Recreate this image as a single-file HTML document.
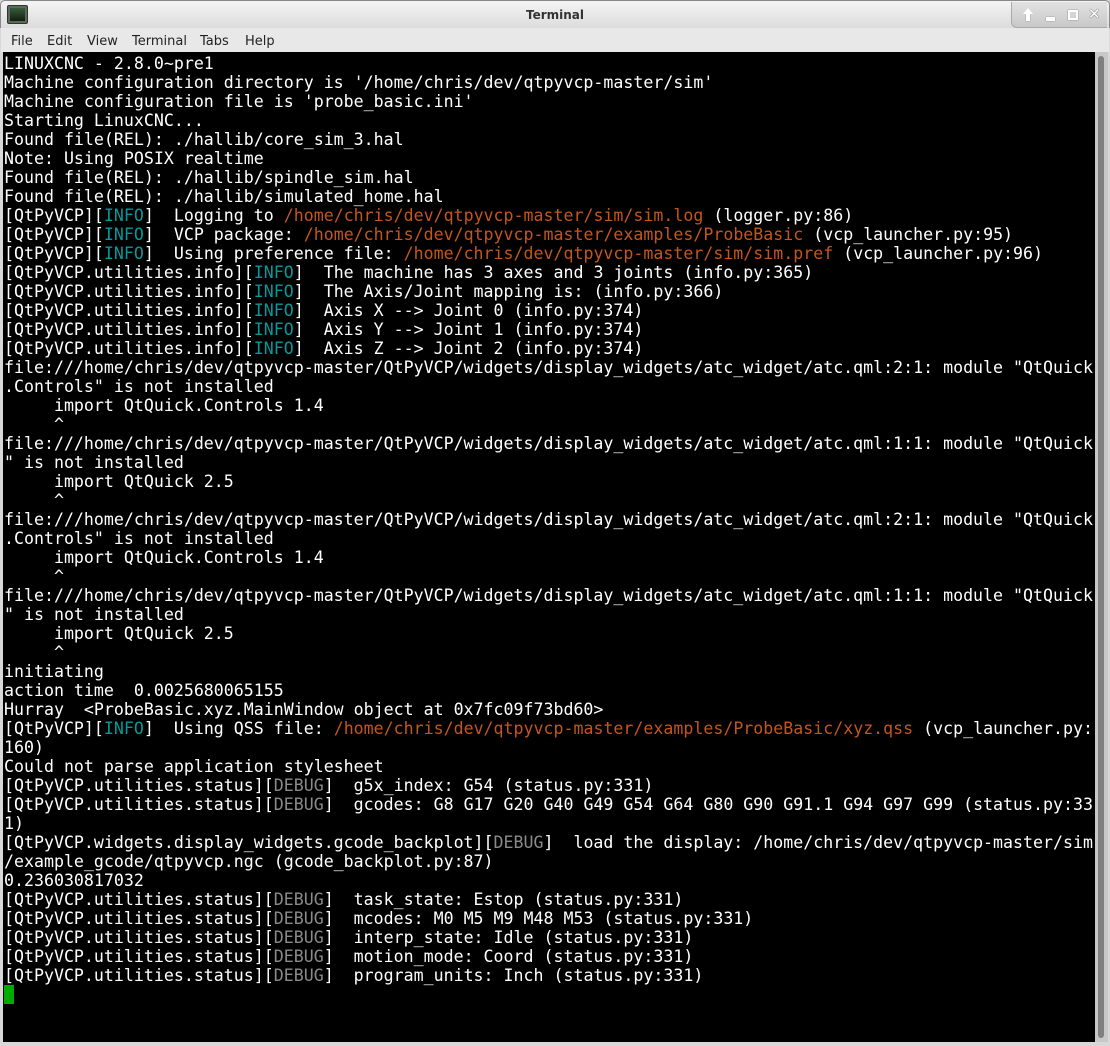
<!DOCTYPE html>
<html><head><meta charset="utf-8"><style>
*{margin:0;padding:0;box-sizing:border-box}
body{width:1110px;height:1046px;overflow:hidden;background:#d8d8d8;font-family:"DejaVu Sans","Liberation Sans",sans-serif;position:relative}
#title{position:absolute;left:0;top:0;width:1110px;height:28px;background:linear-gradient(#f4f4f4,#dcdcdc);border:1px solid #888;border-bottom:none;border-radius:5px 5px 0 0}
#title .t{position:absolute;left:0;right:0;top:7px;text-align:center;font-size:12px;font-weight:bold;color:#333}
#icon{position:absolute;left:6px;top:4px;width:21px;height:19px;background:#5a6a5a;border:1px solid #333;border-radius:2px}
#icon:after{content:"";position:absolute;left:2px;top:2px;width:15px;height:13px;background:linear-gradient(#3a5a3a,#102010)}
#btns{position:absolute;right:2px;top:1px;width:96px;height:26px;background:linear-gradient(#e2e2e2,#c8c8c8);border:1px solid #aaa;border-top:none;border-right:none;border-radius:0 0 0 6px}
#btns i{position:absolute;display:block;border:2px solid #fff;box-shadow:0 0 1px #555}
#menu{position:absolute;left:1px;top:28px;width:1108px;height:24px;background:#e8e8e8;font-size:13px;color:#222}
#menu span{position:absolute;top:6px}
#term{position:absolute;left:3px;top:52px;width:1092px;height:990px;background:#000;overflow:hidden}
pre{position:absolute;left:1px;top:2px;font-family:"DejaVu Sans Mono","Liberation Mono",monospace;font-size:16.6px;line-height:19px;color:#fff;white-space:pre}
.c{color:#06989a}.o{color:#c4561a}.g{color:#8a8a8a}
#cur{position:absolute;left:1px;top:933px;width:10px;height:19px;background:#0a0}
#sb{position:absolute;left:1095px;top:52px;width:13px;height:990px;background:#c8c8c8}
#sb div{position:absolute;left:3px;top:4px;width:6px;height:982px;background:#808080;border-radius:3px}
</style></head><body>
<div id="title"><div id="icon"></div><div class="t">Terminal</div>
<div id="btns"><i style="left:14px;top:12px;width:4px;height:7px;border-width:0;background:#fff"></i><i style="left:11px;top:6px;width:10px;height:6px;border:none;background:none;box-shadow:none;border-left:5px solid transparent;border-right:5px solid transparent;border-bottom:6px solid #fff;width:0;height:0"></i><i style="left:34px;top:15px;width:9px;height:4px"></i><i style="left:56px;top:8px;width:10px;height:10px"></i><span style="position:absolute;left:76px;top:3px;color:#fff;font-size:15px;font-weight:bold;text-shadow:0 0 1px #555,0 0 1px #555">✕</span></div></div>
<div id="menu"><span style="left:10px">File</span><span style="left:46px">Edit</span><span style="left:86px">View</span><span style="left:131px">Terminal</span><span style="left:199px">Tabs</span><span style="left:244px">Help</span></div>
<div id="term"><pre>LINUXCNC - 2.8.0~pre1
Machine configuration directory is '/home/chris/dev/qtpyvcp-master/sim'
Machine configuration file is 'probe_basic.ini'
Starting LinuxCNC...
Found file(REL): ./hallib/core_sim_3.hal
Note: Using POSIX realtime
Found file(REL): ./hallib/spindle_sim.hal
Found file(REL): ./hallib/simulated_home.hal
[QtPyVCP][<span class="c">INFO</span>]  Logging to <span class="o">/home/chris/dev/qtpyvcp-master/sim/sim.log</span> (logger.py:86)
[QtPyVCP][<span class="c">INFO</span>]  VCP package: <span class="o">/home/chris/dev/qtpyvcp-master/examples/ProbeBasic</span> (vcp_launcher.py:95)
[QtPyVCP][<span class="c">INFO</span>]  Using preference file: <span class="o">/home/chris/dev/qtpyvcp-master/sim/sim.pref</span> (vcp_launcher.py:96)
[QtPyVCP.utilities.info][<span class="c">INFO</span>]  The machine has 3 axes and 3 joints (info.py:365)
[QtPyVCP.utilities.info][<span class="c">INFO</span>]  The Axis/Joint mapping is: (info.py:366)
[QtPyVCP.utilities.info][<span class="c">INFO</span>]  Axis X --> Joint 0 (info.py:374)
[QtPyVCP.utilities.info][<span class="c">INFO</span>]  Axis Y --> Joint 1 (info.py:374)
[QtPyVCP.utilities.info][<span class="c">INFO</span>]  Axis Z --> Joint 2 (info.py:374)
file:///home/chris/dev/qtpyvcp-master/QtPyVCP/widgets/display_widgets/atc_widget/atc.qml:2:1: module "QtQuick
.Controls" is not installed
     import QtQuick.Controls 1.4
     ^
file:///home/chris/dev/qtpyvcp-master/QtPyVCP/widgets/display_widgets/atc_widget/atc.qml:1:1: module "QtQuick
" is not installed
     import QtQuick 2.5
     ^
file:///home/chris/dev/qtpyvcp-master/QtPyVCP/widgets/display_widgets/atc_widget/atc.qml:2:1: module "QtQuick
.Controls" is not installed
     import QtQuick.Controls 1.4
     ^
file:///home/chris/dev/qtpyvcp-master/QtPyVCP/widgets/display_widgets/atc_widget/atc.qml:1:1: module "QtQuick
" is not installed
     import QtQuick 2.5
     ^
initiating
action time  0.0025680065155
Hurray  &lt;ProbeBasic.xyz.MainWindow object at 0x7fc09f73bd60&gt;
[QtPyVCP][<span class="c">INFO</span>]  Using QSS file: <span class="o">/home/chris/dev/qtpyvcp-master/examples/ProbeBasic/xyz.qss</span> (vcp_launcher.py:
160)
Could not parse application stylesheet
[QtPyVCP.utilities.status][<span class="g">DEBUG</span>]  g5x_index: G54 (status.py:331)
[QtPyVCP.utilities.status][<span class="g">DEBUG</span>]  gcodes: G8 G17 G20 G40 G49 G54 G64 G80 G90 G91.1 G94 G97 G99 (status.py:33
1)
[QtPyVCP.widgets.display_widgets.gcode_backplot][<span class="g">DEBUG</span>]  load the display: /home/chris/dev/qtpyvcp-master/sim
/example_gcode/qtpyvcp.ngc (gcode_backplot.py:87)
0.236030817032
[QtPyVCP.utilities.status][<span class="g">DEBUG</span>]  task_state: Estop (status.py:331)
[QtPyVCP.utilities.status][<span class="g">DEBUG</span>]  mcodes: M0 M5 M9 M48 M53 (status.py:331)
[QtPyVCP.utilities.status][<span class="g">DEBUG</span>]  interp_state: Idle (status.py:331)
[QtPyVCP.utilities.status][<span class="g">DEBUG</span>]  motion_mode: Coord (status.py:331)
[QtPyVCP.utilities.status][<span class="g">DEBUG</span>]  program_units: Inch (status.py:331)</pre><div id="cur"></div></div>
<div id="sb"><div></div></div>
</body></html>
